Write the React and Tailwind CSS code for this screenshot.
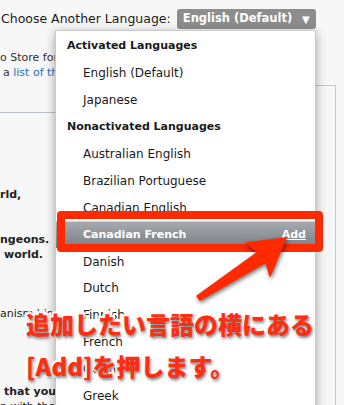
import React from 'react';

// menu rows shown in the dropdown, headers are bold and not indented
const rows = [
  { label: 'Activated Languages', header: true },
  { label: 'English (Default)' },
  { label: 'Japanese' },
  { label: 'Nonactivated Languages', header: true },
  { label: 'Australian English' },
  { label: 'Brazilian Portuguese' },
  { label: 'Canadian English' },
  { label: 'Canadian French', selected: true },
  { label: 'Danish' },
  { label: 'Dutch' },
  { label: 'Finnish' },
  { label: 'French' },
  { label: 'German' },
  { label: 'Greek' },
];

function MenuRow({ row }) {
  if (row.header) {
    return (
      <div className="h-[26.9px] flex items-center pl-[11px] text-[11px] font-bold text-[#1a1a1a]">
        {row.label}
      </div>
    );
  }
  if (row.selected) {
    return (
      <div className="h-[26.9px] flex items-center justify-between pl-[27px] pr-[9px] bg-gradient-to-b from-[#a6aaae] to-[#7a7f84] border-t border-[#d2d5d8] text-white text-[11px] font-bold">
        <span>{row.label}</span>
        <span className="underline text-[11px]">Add</span>
      </div>
    );
  }
  return (
    <div className="h-[26.9px] flex items-center pl-[27px] text-[12px] text-[#1a1a1a]">
      {row.label}
    </div>
  );
}

export default function App() {
  return (
    <div className="relative w-[344px] h-[405px] overflow-hidden bg-[#f7f7f7] font-['DejaVu_Sans',sans-serif] text-[#222]">
      {/* top bar */}
      <div className="flex items-center gap-[6px] pt-[9px] pl-[1px] h-[29px]">
        <span className="text-[12.5px] leading-[20px] text-[#1a1a1a] whitespace-nowrap">Choose Another Language:</span>
        <div className="w-[139px] h-[20px] rounded-[3px] bg-[#8d8d8d] flex items-center justify-between pl-[6px] pr-[6px] text-white text-[11.5px] font-bold whitespace-nowrap">
          <span>English (Default)</span>
          <span className="text-[10px]">▼</span>
        </div>
      </div>

      {/* page behind the menu */}
      <div className="flex">
        <div className="w-[316px] text-[11px] whitespace-nowrap">
          <div className="mt-[21px] leading-[15px] text-[#333]">o Store for the App Store</div>
          <div className="leading-[15px] pl-[3px] text-[#333]">a <span className="text-[#2d6fb0]">list of the stores</span></div>
          <div className="mt-[32px] border-t border-[#b9c0c8]" />
          <div className="mt-[74px] leading-[15px] font-bold">rld,</div>
          <div className="mt-[30px] leading-[15px] font-bold">ngeons.</div>
          <div className="leading-[15px] pl-[4px] font-bold">world.</div>
          <div className="mt-[44px] leading-[15px]">anism big</div>
          <div className="mt-[63px] leading-[15px] pl-[4px] font-bold">that you</div>
          <div className="leading-[15px]">n with the</div>
        </div>
        <div className="w-[20px] mt-[56px] border-t border-r border-[#c3cad2] h-[340px]" />
      </div>

      {/* dropdown menu */}
      <div className="absolute left-[55px] top-[30px] w-[261px] h-[400px] bg-white border border-[#c8c8c8] shadow-[0_3px_10px_rgba(0,0,0,0.35)] pt-[2px]">
        {rows.map(r => (
          <MenuRow key={r.label} row={r} />
        ))}
      </div>

      {/* red highlight box */}
      <div className="absolute left-[57px] top-[211px] w-[266px] h-[41px] border-[8px] border-[#ff2a00] rounded-[4px]" />

      {/* arrow */}
      <svg className="absolute left-0 top-0 w-[344px] h-[405px] drop-shadow-[1px_2px_2px_rgba(0,0,0,0.55)]" viewBox="0 0 344 405">
        <polygon points="286,238 246,243 258,252 197,296 200,300 266,262 270,276" fill="#ff2a00" stroke="#ff2a00" strokeWidth="1.5" strokeLinejoin="round" />
      </svg>

      {/* annotation */}
      <div className="absolute left-[26px] top-[303px] text-[24px] leading-[42px] font-black font-['Noto_Sans_CJK_JP',sans-serif] text-[#ff2d12] whitespace-nowrap [-webkit-text-stroke:4px_white] [paint-order:stroke_fill] [text-shadow:1px_2px_3px_rgba(0,0,0,0.5)]">
        <div>追加したい言語の横にある</div>
        <div>[Add]を押します。</div>
      </div>
    </div>
  );
}
